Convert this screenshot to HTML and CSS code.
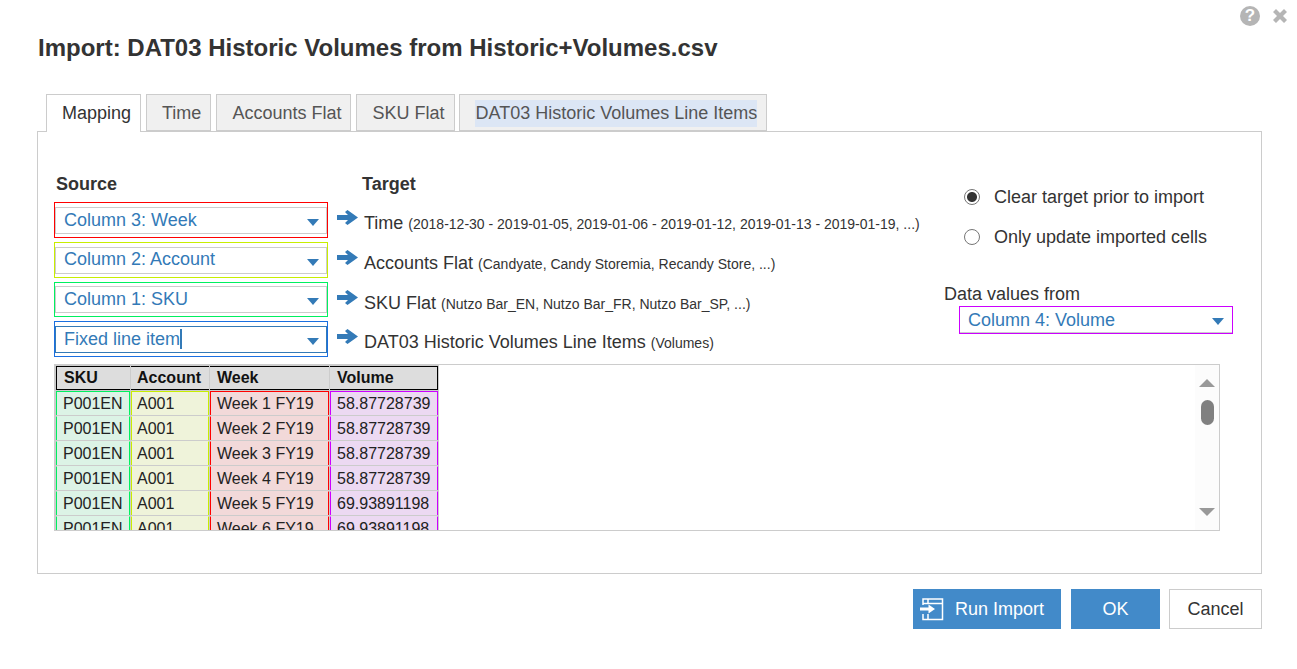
FILE: index.html
```html
<!DOCTYPE html>
<html lang="en">
<head>
<meta charset="utf-8">
<title>Import</title>
<link rel="stylesheet" href="styles.css">
</head>
<body>
<div class="dialog">
  <div class="top-icons">
    <span class="help">?</span>
    <svg class="close" width="14" height="14" viewBox="0 0 14 14"><path d="M3 0 7 4 11 0 14 3 10 7 14 11 11 14 7 10 3 14 0 11 4 7 0 3Z"/></svg>
  </div>
  <div class="content">
    <h1 class="title">Import: DAT03 Historic Volumes from Historic+Volumes.csv</h1>
    <div class="tabs">
      <div class="tab tab-active">Mapping</div>
      <div class="tab">Time</div>
      <div class="tab">Accounts Flat</div>
      <div class="tab tab-sku">SKU Flat</div>
      <div class="tab tab-long"><span class="selected-text">DAT03 Historic Volumes Line Items</span></div>
    </div>
    <div class="panel">
      <div class="mapping">
        <div class="map-left">
          <div class="headings">
            <div class="heading heading-source">Source</div>
            <div class="heading">Target</div>
          </div>
          <div class="map-row">
            <div class="outline outline-red"><div class="select"><span>Column 3: Week</span><i class="caret"></i></div></div>
            <svg class="arrow" width="21" height="15" viewBox="0 0 21 15"><path d="M0 5H11L8 2 10.500 0 21 7.500 10.500 15 8 13 11 10H0Z"/></svg>
            <div class="target">Time <small>(2018-12-30 - 2019-01-05, 2019-01-06 - 2019-01-12, 2019-01-13 - 2019-01-19, ...)</small></div>
          </div>
          <div class="map-row">
            <div class="outline outline-yellow"><div class="select"><span>Column 2: Account</span><i class="caret"></i></div></div>
            <svg class="arrow" width="21" height="15" viewBox="0 0 21 15"><path d="M0 5H11L8 2 10.500 0 21 7.500 10.500 15 8 13 11 10H0Z"/></svg>
            <div class="target">Accounts Flat <small>(Candyate, Candy Storemia, Recandy Store, ...)</small></div>
          </div>
          <div class="map-row map-row-short">
            <div class="outline outline-green"><div class="select"><span>Column 1: SKU</span><i class="caret"></i></div></div>
            <svg class="arrow" width="21" height="15" viewBox="0 0 21 15"><path d="M0 5H11L8 2 10.500 0 21 7.500 10.500 15 8 13 11 10H0Z"/></svg>
            <div class="target">SKU Flat <small>(Nutzo Bar_EN, Nutzo Bar_FR, Nutzo Bar_SP, ...)</small></div>
          </div>
          <div class="map-row map-row-last">
            <div class="outline outline-blue"><div class="select select-focus"><span class="typed">Fixed line item</span><i class="caret"></i></div></div>
            <svg class="arrow" width="21" height="15" viewBox="0 0 21 15"><path d="M0 5H11L8 2 10.500 0 21 7.500 10.500 15 8 13 11 10H0Z"/></svg>
            <div class="target">DAT03 Historic Volumes Line Items <small>(Volumes)</small></div>
          </div>
        </div>
        <div class="map-right">
          <label class="radio-row"><input class="radio" type="radio" name="mode" checked>Clear target prior to import</label>
          <label class="radio-row"><input class="radio" type="radio" name="mode">Only update imported cells</label>
          <div class="values-label">Data values from</div>
          <div class="outline outline-purple"><div class="select"><span>Column 4: Volume</span><i class="caret"></i></div></div>
        </div>
      </div>
      <div class="preview">
        <div class="preview-table">
          <table class="grid">
            <thead>
              <tr><th class="col-1">SKU</th><th class="col-2">Account</th><th class="col-3">Week</th><th class="col-4">Volume</th></tr>
            </thead>
            <tbody>
              <tr class="first"><td class="c-green">P001EN</td><td class="c-yellow">A001</td><td class="c-red">Week 1 FY19</td><td class="c-purple">58.87728739</td></tr>
              <tr><td class="c-green">P001EN</td><td class="c-yellow">A001</td><td class="c-red">Week 2 FY19</td><td class="c-purple">58.87728739</td></tr>
              <tr><td class="c-green">P001EN</td><td class="c-yellow">A001</td><td class="c-red">Week 3 FY19</td><td class="c-purple">58.87728739</td></tr>
              <tr><td class="c-green">P001EN</td><td class="c-yellow">A001</td><td class="c-red">Week 4 FY19</td><td class="c-purple">58.87728739</td></tr>
              <tr><td class="c-green">P001EN</td><td class="c-yellow">A001</td><td class="c-red">Week 5 FY19</td><td class="c-purple">69.93891198</td></tr>
              <tr><td class="c-green">P001EN</td><td class="c-yellow">A001</td><td class="c-red">Week 6 FY19</td><td class="c-purple">69.93891198</td></tr>
            </tbody>
          </table>
        </div>
        <div class="scrollbar">
          <i class="sb-up"></i>
          <i class="sb-thumb"></i>
          <i class="sb-down"></i>
        </div>
      </div>
    </div>
    <div class="footer">
      <button class="btn btn-primary btn-run" type="button">
        <svg width="24" height="23" viewBox="0 0 24 23" fill="none" stroke="#fff" stroke-width="1.500"><path d="M3 7V1H22.500V21.500H3V16M3 5.500H22.500M8 1V5.500M8 16V21.500"/><path d="M0 9.500H8.500V6.500L15 11 8.500 15.500V12.500H0Z" fill="#fff" stroke="none"/></svg>
        Run Import
      </button>
      <button class="btn btn-primary btn-ok" type="button">OK</button>
      <button class="btn btn-cancel" type="button">Cancel</button>
    </div>
  </div>
</div>
</body>
</html>
```
FILE: styles.css
```css
* { box-sizing: border-box; }
html, body { margin: 0; padding: 0; }
body {
  font-family: "Liberation Sans", Arial, sans-serif;
  font-size: 18px;
  color: #333;
  background: #fff;
  overflow: hidden;
}
.dialog { padding: 6px 10px 0 37px; width: 1297px; height: 669px; }
.top-icons { display: flex; justify-content: flex-end; align-items: center; gap: 13px; height: 20px; }
.help {
  width: 20px; height: 20px; border-radius: 50%;
  background: #b5b5b5; color: #fff;
  font-size: 17px; font-weight: 700; line-height: 20px; text-align: center;
}
.close { fill: #b5b5b5; }
.content { margin-right: 25px; }
.title { margin: 6px 0 0 1px; font-size: 24px; line-height: 32px; font-weight: 700; color: #333; }
.tabs { display: flex; gap: 5px; margin: 30px 0 0 9px; height: 38px; position: relative; z-index: 1; }
.tab {
  height: 37px; padding: 0 9px 0 15px; line-height: 37px;
  border: 1px solid #ccc;
  background: #f0f0f0; color: #555;
}
.tab-active { height: 38px; background: #fff; color: #333; border-bottom: 0; }
.tab-sku { padding-right: 10px; }
.tab-long { margin-left: -1px; padding: 0 9px 0 15px; }
.selected-text { display: inline-block; height: 27px; line-height: 27px; background: #dce6f5; }
.panel {
  margin-top: -1px;
  height: 443px;
  border: 1px solid #ccc;
  padding: 40px 41px 0 16px;
}
.mapping { display: flex; }
.map-left { width: 890px; flex: none; }
.headings { display: flex; height: 24px; margin-bottom: 6px; font-weight: 700; line-height: 24px; }
.heading-source { width: 308px; padding-left: 2px; }
.map-row { display: flex; align-items: flex-start; height: 36px; margin-bottom: 4px; }
.map-row-short { height: 35px; }
.map-row-last { margin-bottom: 0; }
.outline { width: 274px; flex: none; border: 1px solid; padding: 4px 0 3px; }
.outline-red { border-color: #ff0000; height: 36px; }
.outline-yellow { border-color: #c8ee00; height: 36px; }
.outline-green { border-color: #00f060; height: 35px; padding-top: 3px; }
.outline-blue { border-color: #1a6fe0; height: 36px; }
.outline-purple { border-color: #cc00ff; height: 28px; padding: 0; margin-left: 15px; }
.select {
  display: flex; align-items: center; justify-content: space-between;
  height: 100%; padding: 0 7px 0 8px;
  border: 1px solid #ccc;
  color: #337ab7; line-height: 24px;
}
.select span { padding-bottom: 2px; }
.outline-yellow .select span { padding-bottom: 4px; }
.outline-purple .select { border: 0; border-bottom: 1px solid #ccc; padding-right: 8px; }
.outline-purple .select span { padding-bottom: 0; }
.select-focus { border-color: #337ab7; }
.select .typed { border-right: 2px solid #337ab7; height: 20px; line-height: 20px; padding-bottom: 0; margin-bottom: 2px; }
.caret {
  width: 0; height: 0; margin-top: 3px;
  border-left: 6px solid transparent; border-right: 6px solid transparent; border-top: 7px solid #337ab7;
}
.arrow { flex: none; margin: 8px 0 0 9px; fill: #337ab7; }
.target { margin-left: 6px; padding-top: 9px; white-space: nowrap; line-height: 24px; }
.target small { font-size: 14px; }
.map-right { flex: 1; padding-top: 13px; }
.radio-row { display: flex; align-items: center; height: 24px; margin: 0 0 16px 20px; }
.radio {
  appearance: none; -webkit-appearance: none;
  width: 16px; height: 16px; margin: 0 14px 0 0;
  border: 1px solid #767676; border-radius: 50%; background: #fff;
}
.radio:checked { background: radial-gradient(circle, #333 0 4.500px, #fff 5.500px); }
.values-label { margin-top: 33px; height: 24px; line-height: 24px; }
.preview {
  display: flex; margin-top: 7px; height: 167px;
  border: 1px solid #ccc; background: #fff;
}
.preview-table { flex: 1; overflow: hidden; }
.grid {
  border-collapse: separate; border-spacing: 1px; background: #ccc;
  font-size: 16px; table-layout: fixed; width: 384px; color: #222;
}
.grid th, .grid td { height: 24px; padding: 0 0 0 7px; text-align: left; white-space: nowrap; line-height: 22px; }
.grid th { background: #ddd; color: #111; border-top: 1px solid #000; border-bottom: 1px solid #000; }
.grid .col-1 { width: 74px; border-left: 1px solid #000; }
.grid .col-2 { width: 78px; padding-left: 6px; }
.col-3 { width: 119px; }
.grid .col-4 { width: 108px; border-right: 1px solid #000; }
.grid td { border-style: solid; border-width: 0 1px; padding-left: 6px; }
.grid .first td { border-top-width: 1px; }
.grid tr:not(.first) td { border-top: 1px solid transparent; }
.grid .c-green { background: #dcf3e6; border-left-color: #00f060; border-right-color: #00f060; border-top-color: #00f060; }
.grid .c-yellow { background: #eff3da; border-left-color: #c8ee00; border-right-color: #c8ee00; border-top-color: #c8ee00; padding-left: 5px; }
.grid .c-red { background: #f2d9d9; border-left-color: #ff0000; border-right-color: #ff0000; border-top-color: #ff0000; }
.grid .c-purple { background: #ecd9f2; border-left-color: #cc00ff; border-right-color: #cc00ff; border-top-color: #cc00ff; }
.grid tr:not(.first) .c-green, .grid tr:not(.first) .c-yellow, .grid tr:not(.first) .c-red, .grid tr:not(.first) .c-purple { border-top-color: transparent; }
.scrollbar {
  width: 24px; flex: none; background: #fcfcfc;
  display: flex; flex-direction: column; align-items: center;
}
.sb-up, .sb-down { width: 0; height: 0; border-left: 8px solid transparent; border-right: 8px solid transparent; }
.sb-up { margin-top: 14px; border-bottom: 8px solid #999; }
.sb-thumb { width: 13px; height: 25px; margin-top: 13px; border-radius: 7px; background: #808080; }
.sb-down { margin-top: 83px; border-top: 8px solid #999; }
.footer { display: flex; justify-content: flex-end; margin-top: 15px; gap: 10px; }
.btn {
  height: 40px; font: inherit; border: 0; padding: 0; cursor: pointer;
  display: flex; align-items: center; justify-content: center;
}
.btn-primary { background: #428ac9; color: #fff; }
.btn-run { width: 148px; justify-content: flex-start; padding-left: 7px; gap: 11px; }
.btn-ok { width: 89px; }
.btn-cancel { width: 93px; margin-left: -1px; background: #fff; color: #333; border: 1px solid #ccc; }
```
